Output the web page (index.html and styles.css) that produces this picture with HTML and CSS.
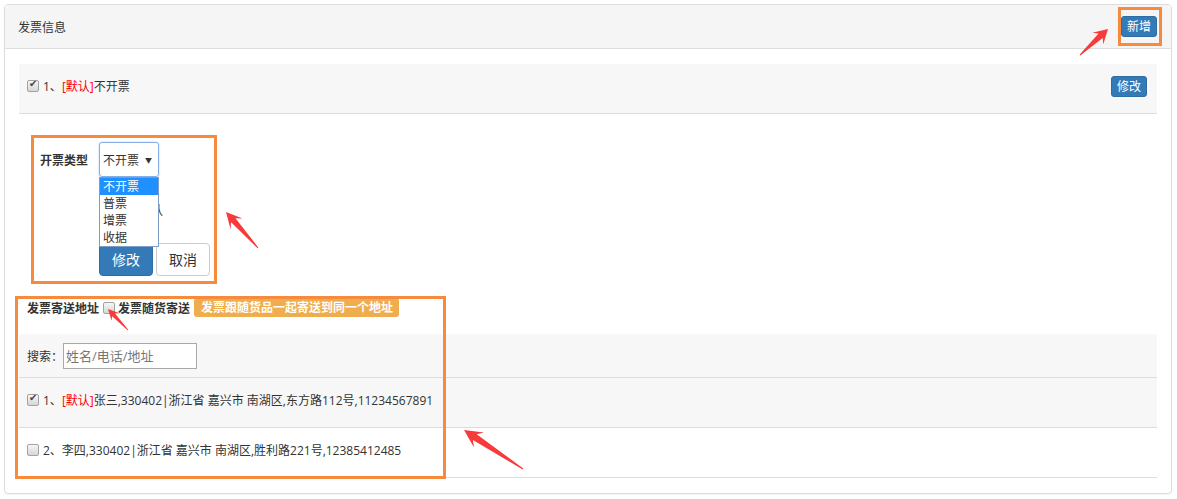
FILE: index.html
```html
<!DOCTYPE html>
<html lang="zh-CN">
<head>
    <meta charset="UTF-8">
    <title>发票信息</title>
    <link rel="stylesheet" href="styles.css">
</head>
<body>

<div class="panel">
    <div class="panel-heading">
        <span>发票信息</span>
        <button class="btn btn-primary btn-xs">新增</button>
    </div>
    <div class="panel-body">

        <div class="list-row striped">
            <label class="row-text"><input type="checkbox" class="check" checked>1、<span class="tag-default">[默认]</span>不开票</label>
            <button class="btn btn-primary btn-xs">修改</button>
        </div>

        <form class="invoice-form">
            <div class="form-group">
                <label class="form-label">开票类型</label>
                <div class="select-wrap">
                    <div class="fake-select">不开票<span class="caret">▼</span></div>
                    <!-- open dropdown of the select -->
                    <ul class="select-options">
                        <li class="active">不开票</li>
                        <li>普票</li>
                        <li>增票</li>
                        <li>收据</li>
                    </ul>
                </div>
            </div>
            <div class="form-group form-offset form-check-row">
                <label><input type="checkbox" class="check">设为默认</label>
            </div>
            <div class="form-group form-offset form-buttons">
                <button type="button" class="btn btn-primary">修改</button>
                <button type="button" class="btn btn-default">取消</button>
            </div>
        </form>

        <div class="address-head">
            <span>发票寄送地址</span>
            <input type="checkbox" class="check head-check">
            <span>发票随货寄送</span>
            <span class="badge-warning">发票跟随货品一起寄送到同一个地址</span>
        </div>

        <div class="search-row">
            <span>搜索：</span>
            <input type="text" class="search-input" placeholder="姓名/电话/地址">
        </div>

        <div class="list-row striped">
            <label class="row-text"><input type="checkbox" class="check" checked>1、<span class="tag-default">[默认]</span>张三,330402|浙江省 嘉兴市 南湖区,东方路112号,11234567891</label>
        </div>
        <div class="list-row">
            <label class="row-text"><input type="checkbox" class="check">2、李四,330402|浙江省 嘉兴市 南湖区,胜利路221号,12385412485</label>
        </div>

    </div>
</div>

<!-- screenshot annotations -->
<svg class="annotations" width="1177" height="499" viewBox="0 0 1177 499">
    <g fill="none" stroke="#f68b3d" stroke-width="3">
        <rect x="1119.5" y="8.5" width="41" height="36"/>
        <rect x="32.5" y="136.5" width="183" height="146"/>
        <rect x="16.5" y="297.5" width="428" height="180"/>
    </g>
    <g fill="#f73b3b">
        <polygon points="1108,29 1103.2,44.4 1102.7,38 1080.3,55.4 1079.7,54.6 1098.6,33.6 1092.3,32.7"/>
        <polygon points="226,212 242.6,218.6 235.5,218.2 258.4,247.7 257.6,248.3 231.1,222.2 230.6,229.3"/>
        <polygon points="108,309 119.6,313.2 115,313.4 128.3,329.7 127.7,330.3 112.1,316.2 111.6,320.8"/>
        <polygon points="464,430 484,432.4 476.7,434.3 523.3,468.6 522.7,469.4 472.9,440.1 474,447.4"/>
    </g>
</svg>

</body>
</html>
```

FILE: styles.css
```css
body {
    margin: 0;
    font-family: "Open Sans", "Noto Sans CJK SC", sans-serif;
    font-size: 12px;
    color: #333;
    background-color: #fff;
}
.panel {
    width: 1168px;
    margin: 4px;
    border: 1px solid #ddd;
    border-radius: 4px;
    box-sizing: border-box;
    box-shadow: 0 1px 1px rgba(0, 0, 0, 0.05);
}
.panel-heading {
    height: 44px;
    box-sizing: border-box;
    padding: 0 14px 0 13px;
    display: flex;
    align-items: center;
    justify-content: space-between;
    background-color: #f5f5f5;
    border-bottom: 1px solid #ddd;
}
.panel-body {
    padding: 15px 14px;
}
.btn {
    font-family: inherit;
    font-size: 14px;
    line-height: 19px;
    padding: 6px 12px;
    border: 1px solid transparent;
    border-radius: 4px;
    cursor: pointer;
}
.btn-xs {
    font-size: 12px;
    line-height: 17px;
    padding: 1px 5px;
    border-radius: 3px;
}
.btn-primary {
    background-color: #337ab7;
    border-color: #2e6da4;
    color: #fff;
}
.btn-default {
    background-color: #fff;
    border-color: #ccc;
    color: #333;
}
.check {
    appearance: none;
    -webkit-appearance: none;
    position: relative;
    width: 12px;
    height: 12px;
    margin: 0 4px 0 0;
    box-sizing: border-box;
    border: 1px solid #a3a3a3;
    border-radius: 2px;
    background: linear-gradient(#f6f6f6, #d6d6d6);
    flex-shrink: 0;
}
.check:checked::after {
    content: "✔";
    position: absolute;
    left: 1px;
    top: -3px;
    font-family: "DejaVu Sans", sans-serif;
    font-size: 10px;
    color: #444;
}
.list-row {
    height: 50px;
    box-sizing: border-box;
    padding: 0 10px 5px 8px;
    display: flex;
    align-items: center;
    justify-content: space-between;
    border-bottom: 1px solid #ddd;
}
.striped {
    background-color: #f7f7f7;
}
.row-text {
    display: flex;
    align-items: center;
    line-height: 17px;
}
.row-text .check {
    margin-right: 4px;
}
.tag-default {
    color: #f00;
}
.invoice-form {
    padding: 28px 0 0 21px;
}
.form-group {
    display: flex;
    align-items: center;
}
.form-label {
    width: 59px;
    font-weight: bold;
}
.form-offset {
    padding-left: 59px;
}
.form-check-row {
    height: 66px;
}
.form-check-row label {
    display: flex;
    align-items: center;
}
.form-buttons {
    gap: 3px;
}
.select-wrap {
    position: relative;
}
.fake-select {
    width: 60px;
    height: 35px;
    box-sizing: border-box;
    padding-left: 3px;
    display: flex;
    align-items: center;
    border: 1px solid #86aee8;
    border-radius: 3px;
    box-shadow: 0 0 2px rgba(102, 150, 230, 0.5);
}
.caret {
    margin-left: auto;
    margin-right: 6px;
    font-size: 7px;
    color: #333;
}
.select-options {
    position: absolute;
    top: 100%;
    left: 0;
    z-index: 5;
    width: 60px;
    box-sizing: border-box;
    margin: 0;
    padding: 0;
    list-style: none;
    background-color: #fff;
    border: 1px solid #7f9bc8;
}
.select-options li {
    height: 17px;
    line-height: 17px;
    padding-left: 3px;
}
.select-options li.active {
    background-color: #1e90ff;
    color: #fff;
}
.address-head {
    margin-top: 22px;
    height: 19px;
    padding-left: 8px;
    display: flex;
    align-items: center;
    font-weight: bold;
}
.head-check {
    margin: 0 3px 0 4px;
}
.badge-warning {
    margin-left: 4px;
    height: 19px;
    line-height: 19px;
    padding: 0 6px 0 7px;
    background-color: #f0ad4e;
    color: #fff;
    border-radius: 3px;
}
.search-row {
    margin-top: 17px;
    height: 44px;
    box-sizing: border-box;
    padding-left: 8px;
    display: flex;
    align-items: center;
    background-color: #f7f7f7;
    border-bottom: 1px solid #ddd;
}
.search-input {
    width: 134px;
    height: 26px;
    box-sizing: border-box;
    padding: 1px 2px;
    border: 1px solid #a9a9a9;
    font-family: inherit;
    font-size: 13px;
    color: #333;
}
.search-input::placeholder {
    color: #777;
}
.annotations {
    position: absolute;
    top: 0;
    left: 0;
    pointer-events: none;
}
```
